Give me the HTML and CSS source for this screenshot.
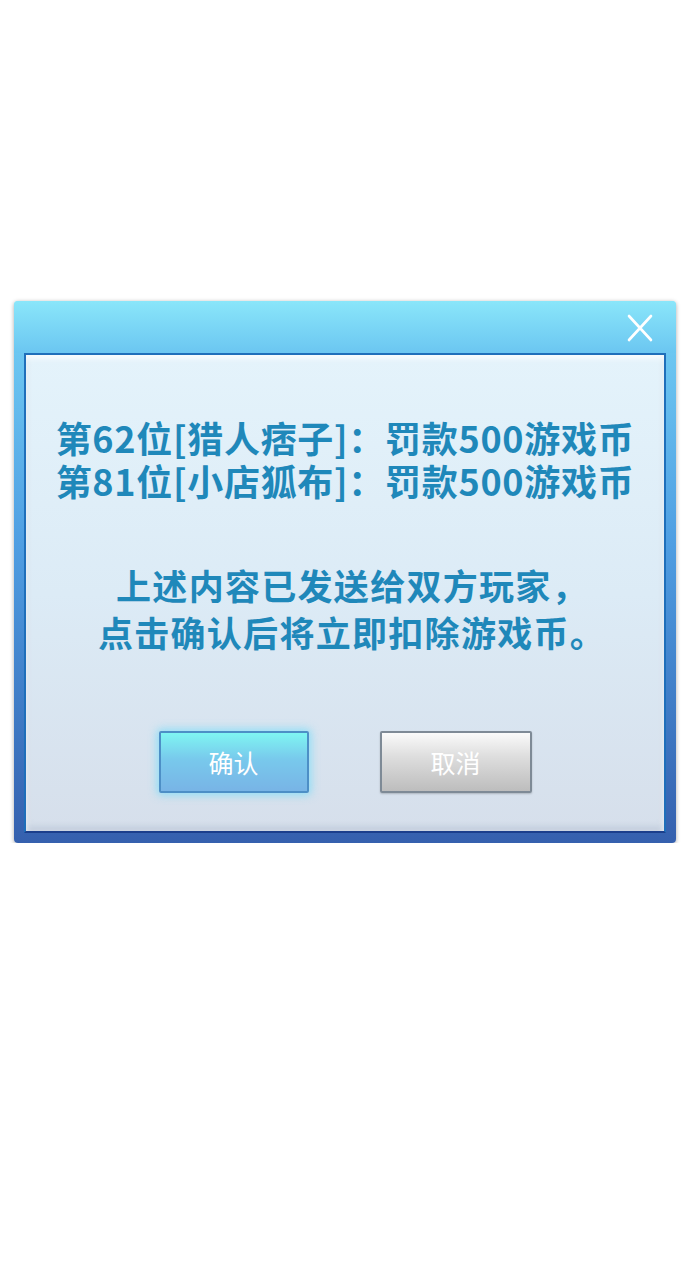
FILE: index.html
```html
<!DOCTYPE html>
<html lang="zh-CN">
  <head>
    <meta charset="UTF-8" />
    <meta name="viewport" content="width=device-width, initial-scale=1.0" />
    <title>罚款确认</title>
    <link rel="stylesheet" href="styles.css">
  </head>
  <body>
    <div class="dialog">
      <div class="head">
        <span class="close">
          <svg width="28" height="28" viewBox="0 0 28 28">
            <path d="M3 2 L25 26 M25 2 L3 26" stroke="#ffffff" stroke-width="2.6" stroke-linecap="round" fill="none" />
          </svg>
        </span>
      </div>
      <div class="panel">
        <div class="list">
          <p>第62位[猎人痞子]：罚款500游戏币</p>
          <p>第81位[小店狐布]：罚款500游戏币</p>
        </div>
        <div class="notice">
          <p>上述内容已发送给双方玩家，</p>
          <p>点击确认后将立即扣除游戏币。</p>
        </div>
        <div class="btns">
          <div class="btn ok">确认</div>
          <div class="btn cancel">取消</div>
        </div>
      </div>
    </div>
  </body>
</html>
```

FILE: styles.css
```css
body {
  margin: 0;
  background: #ffffff;
  font-family: "Noto Sans CJK SC", "Noto Sans", sans-serif;
}
p {
  margin: 0;
}
.dialog {
  margin: 301px 14px 0;
  width: 642px;
  padding: 0 10px 10px;
  border-radius: 4px;
  background: linear-gradient(to bottom, #8ae6fa 0%, #6cc6f1 10%, #4f9ee2 45%, #3f7cc6 75%, #3560ae 100%);
  box-shadow: 0 1px 4px rgba(0, 0, 0, 0.35);
}
.head {
  height: 52px;
  display: flex;
  justify-content: flex-end;
  align-items: center;
  background: linear-gradient(to bottom, #8ae6fa, #6bc6f1);
  margin: 0 -10px;
  padding: 0 22px 0 0;
  border-radius: 4px 4px 0 0;
}
.close {
  display: flex;
  margin-top: 2px;
}
.panel {
  height: 480px;
  box-sizing: border-box;
  border: 2px solid #1f6fba;
  border-bottom-color: #1b3f8c;
  background: linear-gradient(to bottom, #e4f3fb 0%, #dcebf6 50%, #d6dfeb 100%);
  box-shadow: inset 0 3px 6px rgba(255, 255, 255, 0.9), inset 0 -4px 6px rgba(150, 165, 190, 0.35);
  padding-top: 61px;
  display: flex;
  flex-direction: column;
  align-items: center;
  color: #1f88ba;
  font-weight: bold;
}
.list {
  font-size: 36px;
  line-height: 43px;
  letter-spacing: 0.7px;
  text-align: center;
}
.notice {
  margin-top: 59px;
  padding-left: 14px;
  font-size: 35px;
  line-height: 47px;
  letter-spacing: 1.3px;
  text-align: center;
}
.btns {
  margin-top: 76px;
  display: flex;
  gap: 71px;
}
.btn {
  width: 150px;
  height: 62px;
  box-sizing: border-box;
  display: flex;
  justify-content: center;
  align-items: center;
  font-size: 25px;
  font-weight: normal;
  color: #ffffff;
  border-radius: 2px;
}
.ok {
  background: linear-gradient(to bottom, #7ff5f2 0%, #78c9ec 45%, #78b4e6 100%);
  border: 2px solid #4d8fc6;
  box-shadow: 0 0 8px 2px rgba(110, 220, 250, 0.7);
}
.cancel {
  width: 152px;
  background: linear-gradient(to bottom, #fafafa 0%, #dedede 40%, #bdbdbd 100%);
  border: 2px solid #7e8a96;
  box-shadow: 0 1px 2px rgba(0, 0, 0, 0.2);
}
```
